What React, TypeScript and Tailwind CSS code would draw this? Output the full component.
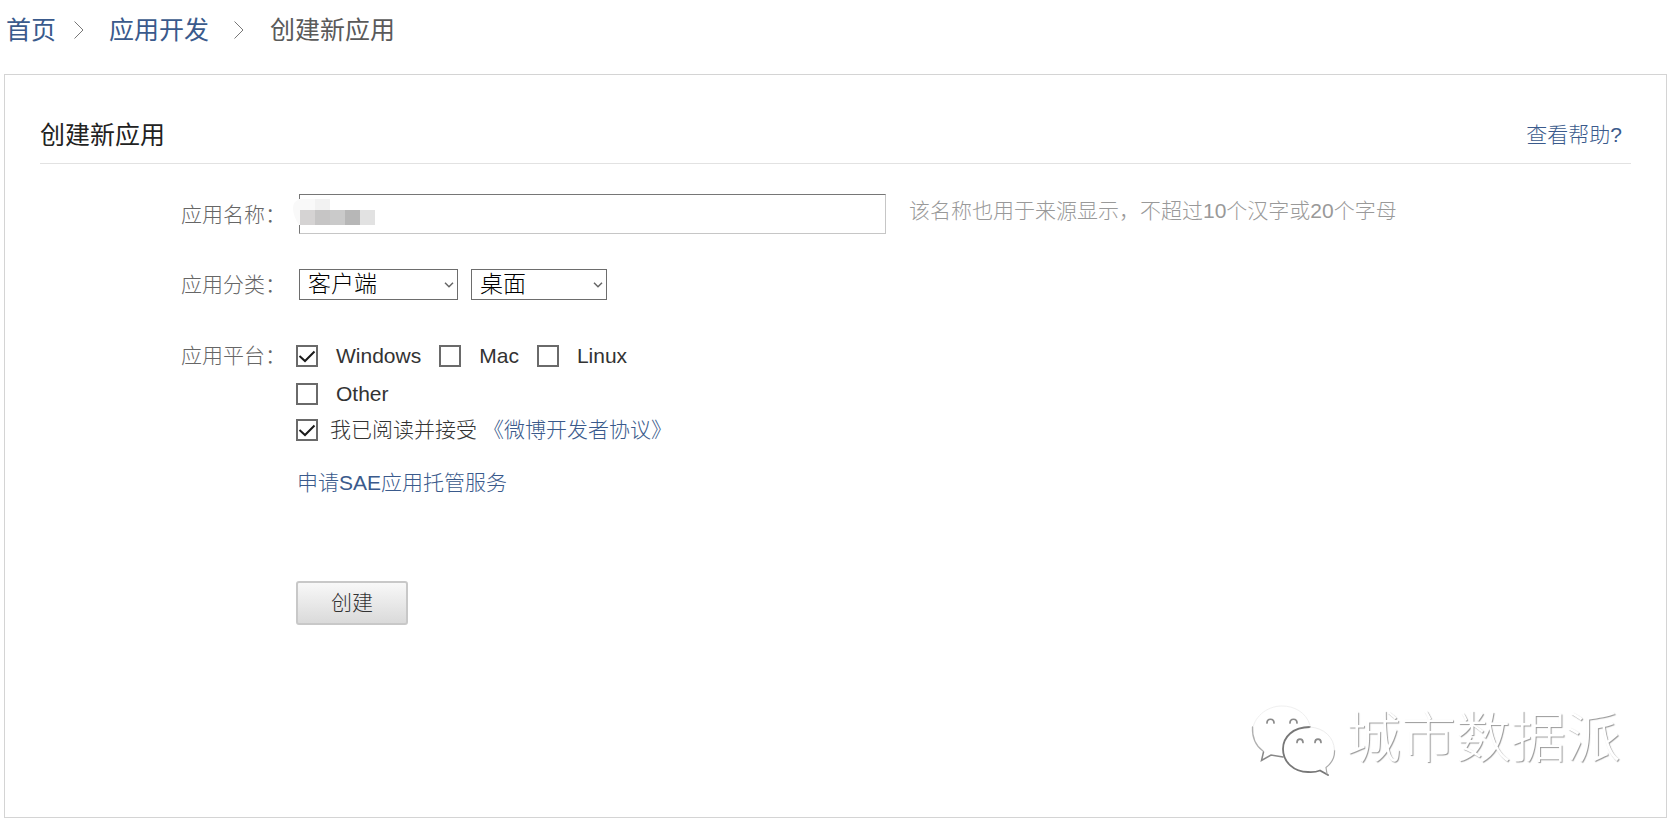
import React from "react";

const linkClass = "text-[#3a5a8c] hover:underline";
const checkboxClass =
  "peer col-start-1 row-start-1 h-[22px] w-[22px] appearance-none border-2 border-[#6a6a6a] bg-white";

function Checkbox({ id, defaultChecked = false }: { id: string; defaultChecked?: boolean }) {
  return (
    <span className="grid shrink-0">
      <input id={id} type="checkbox" defaultChecked={defaultChecked} className={checkboxClass} />
      <svg
        viewBox="0 0 22 22"
        className="pointer-events-none invisible col-start-1 row-start-1 h-[22px] w-[22px] peer-checked:visible"
        fill="none"
        stroke="#1a1a1a"
        strokeWidth="2"
        aria-hidden="true"
      >
        <path d="M3.5 11L9 16L18.5 6.5" />
      </svg>
    </span>
  );
}

function Platform({ id, label, defaultChecked }: { id: string; label: string; defaultChecked?: boolean }) {
  return (
    <span className="flex items-center gap-[18px]">
      <Checkbox id={id} defaultChecked={defaultChecked} />
      <label htmlFor={id} className="text-[#333]">{label}</label>
    </span>
  );
}

function Select({ id, label, width, options }: { id: string; label: string; width: string; options: string[] }) {
  return (
    <span className={`grid items-center ${width}`}>
      <select
        id={id}
        aria-label={label}
        className="col-start-1 row-start-1 h-[31px] w-full appearance-none border border-[#6d6d6d] bg-white pr-6 pb-[2px] pl-2 text-[23px] leading-7 font-light text-black"
      >
        {options.map((o) => (
          <option key={o}>{o}</option>
        ))}
      </select>
      <svg
        viewBox="0 0 10 6"
        className="pointer-events-none col-start-1 row-start-1 mr-1 h-[6px] w-[10px] justify-self-end"
        fill="none"
        stroke="#666"
        strokeWidth="1.5"
        aria-hidden="true"
      >
        <path d="M1 .8L5 4.8L9 .8" />
      </svg>
    </span>
  );
}

function Separator() {
  return (
    <svg viewBox="0 0 10 18" className="h-[18px] w-[10px]" fill="none" stroke="#777" strokeWidth="1" aria-hidden="true">
      <path d="M.5 .5L9 9L.5 17.5" />
    </svg>
  );
}

function Mosaic() {
  return (
    <svg viewBox="0 0 84 30" className="pointer-events-none col-start-1 row-start-1 mt-1 -ml-[7px] h-[30px] w-[84px]" aria-hidden="true">
      <path d="M8 1H23V12H8V27H7Q1 18 1 10Q1 4 6 2V1Z" fill="#f9f9f9" />
      <rect x="23" y="1" width="15" height="11" fill="#f2f2f2" />
      <rect x="8" y="12" width="15" height="15" fill="#d5d3d3" />
      <rect x="23" y="12" width="15" height="15" fill="#c6c5c5" />
      <rect x="38" y="12" width="15" height="15" fill="#cacaca" />
      <rect x="53" y="12" width="15" height="15" fill="#b7b7b7" />
      <rect x="68" y="12" width="15" height="15" fill="#e2e2e2" />
    </svg>
  );
}

function Watermark() {
  return (
    <div className="flex items-center justify-end gap-[9px] pr-[10px]">
      <svg viewBox="3 5 86 72" className="h-[72px] w-[86px]" fill="none" strokeLinecap="round" aria-hidden="true">
        <path d="M62 25C58 12 46 6 34 6C18 6 5 18 4.500 31" stroke="#f0f0f0" strokeWidth="1" />
        <path d="M4.500 27C4 39 8 46 15 51" stroke="#b0b0b0" strokeWidth="1.300" />
        <path d="M15.500 52L13.500 60.500L23 55L35 57" stroke="#888" strokeWidth="1.500" />
        <path d="M62 27C45 27 35 37 35 49C35 62 46 72 60 72Q67 72.500 72 70.500L80 75" stroke="#777" strokeWidth="1.800" />
        <path d="M79 74L78 67.500C84 63 87 57 86.500 50" stroke="#aaa" strokeWidth="1.200" />
        <path d="M86.500 50C86 37 76 28 62 27" stroke="#ededed" strokeWidth="1" />
        <path
          d="M19 23C19 18 26 18 26 23M42 23C42 18 49 18 49 23M49 42.500C49 38 55 38 55 42.500M67 42.500C67 38 73 38 73 42.500"
          stroke="#8a8a8a"
          strokeWidth="1.700"
        />
      </svg>
      <span className="pb-[6px] text-[55px] leading-[66px] font-light text-white [text-shadow:1px_1px_1px_#999]">
        城市数据派
      </span>
    </div>
  );
}

const rowLabel = "w-[115px] shrink-0 text-[#666]";

export default function App() {
  return (
    <div className="min-h-screen bg-white px-1 pb-1 font-['Liberation_Sans','Noto_Sans_CJK_SC',sans-serif] text-[21px] leading-[30px] font-light">
      <nav aria-label="breadcrumb" className="flex h-[74px] items-start pt-3 pl-[2px] text-[25px] leading-9 font-normal">
        <a href="#home" className={linkClass}>首页</a>
        <span className="flex h-9 w-[53px] items-center pl-[18px]"><Separator /></span>
        <a href="#apps" className={linkClass}>应用开发</a>
        <span className="flex h-9 w-[61px] items-center pl-[25px]"><Separator /></span>
        <span className="text-[#5a5a5a]">创建新应用</span>
      </nav>

      <main className="border border-[#d4d4d4] px-[35px] pt-[42px] pb-10">
        <header className="flex items-center justify-between border-b border-[#e2e2e2] pb-[10px]">
          <h1 className="text-[25px] leading-9 font-normal text-[#222]">创建新应用</h1>
          <a href="#help" className={`${linkClass} pr-[9px]`}>查看帮助?</a>
        </header>

        <form className="pt-[30px] pl-[141px]" onSubmit={(e) => e.preventDefault()}>
          <div className="flex h-[40px] items-center">
            <label htmlFor="name" className={`${rowLabel} pt-[2px]`}>应用名称：</label>
            <div className="ml-[3px] grid w-[587px]">
              <input
                id="name"
                type="text"
                className="col-start-1 row-start-1 h-[40px] w-full border border-t-[#767676] border-r-[#c6c6c6] border-b-[#c6c6c6] border-l-[#767676] px-2 text-black"
              />
              <Mosaic />
            </div>
            <span className="ml-[23px] pb-[6px] text-[#999]">该名称也用于来源显示，不超过10个汉字或20个字母</span>
          </div>

          <div className="mt-[35px] flex h-[31px] items-center">
            <span className={rowLabel}>应用分类：</span>
            <div className="ml-[3px] flex gap-[13px]">
              <Select id="category" label="应用分类" width="w-[159px]" options={["客户端"]} />
              <Select id="subcategory" label="应用子分类" width="w-[136px]" options={["桌面"]} />
            </div>
          </div>

          <div className="mt-[41px] flex">
            <span className={rowLabel}>应用平台：</span>
            <div>
              <div className="flex gap-[18px]">
                <Platform id="windows" label="Windows" defaultChecked />
                <Platform id="mac" label="Mac" />
                <Platform id="linux" label="Linux" />
              </div>
              <div className="mt-2 flex">
                <Platform id="other" label="Other" />
              </div>
              <div className="mt-[6px] flex items-center">
                <Checkbox id="agree" defaultChecked />
                <label htmlFor="agree" className="ml-3 text-[#333]">我已阅读并接受</label>
                <a href="#agreement" className={`${linkClass} ml-[6px]`}>《微博开发者协议》</a>
              </div>
              <a href="#sae" className={`${linkClass} mt-[23px] ml-[1px] block`}>申请SAE应用托管服务</a>
              <button
                type="submit"
                className="mt-[83px] block h-[44px] w-[112px] rounded-[3px] border-2 border-[#c8c8c8] bg-linear-to-b from-[#f8f8f8] to-[#dadada] text-[#333]"
              >
                创建
              </button>
            </div>
          </div>
        </form>

        <div className="mt-20">
          <Watermark />
        </div>
      </main>
    </div>
  );
}
